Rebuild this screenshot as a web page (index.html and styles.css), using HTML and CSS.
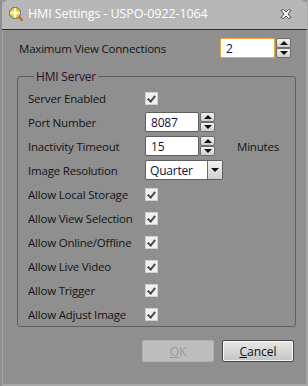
FILE: index.html
```html
<!DOCTYPE html>
<html lang="en">
<head>
    <meta charset="UTF-8">
    <title>HMI Settings</title>
    <link rel="stylesheet" href="styles.css">
</head>
<body>
    <div class="window">
        <div class="titlebar">
            <svg class="app-icon" width="16" height="16" viewBox="0 0 16 16">
                <line x1="10" y1="10" x2="14" y2="14" stroke="#c06a20" stroke-width="2.4" stroke-linecap="round"/>
                <circle cx="7" cy="7" r="5.6" fill="#f2d21c" stroke="#5a6a9a" stroke-width="1"/>
                <line x1="7" y1="1.8" x2="7" y2="12.2" stroke="#fff" stroke-width="1.2"/>
                <line x1="1.8" y1="7" x2="12.2" y2="7" stroke="#fff" stroke-width="1.2"/>
                <circle cx="7" cy="7" r="2" fill="none" stroke="#fff" stroke-width="1"/>
            </svg>
            <span class="title">HMI Settings - USPO-0922-1064</span>
            <svg class="close" width="12" height="10" viewBox="0 0 12 10">
                <path d="M1 1.5 L3.5 0.5 L6 3 L8.5 0.5 L11 1.5 L8 5 L11 8.5 L8.5 9.5 L6 7 L3.5 9.5 L1 8.5 L4 5 Z" fill="#f4f4f4" stroke="#3c3c3c" stroke-width="0.9" stroke-linejoin="round"/>
            </svg>
        </div>

        <div class="content">
            <div class="top-row">
                <label>Maximum View Connections</label>
                <div class="spinner wide">
                    <div class="textbox focused">2</div>
                    <div class="spin">
                        <span class="up"></span>
                        <span class="down"></span>
                    </div>
                </div>
            </div>

            <fieldset class="group">
                <legend>HMI Server</legend>
                <div class="grid">
                    <label>Server Enabled</label>
                    <div><span class="check"></span></div>

                    <label>Port Number</label>
                    <div class="spinner">
                        <div class="textbox">8087</div>
                        <div class="spin">
                            <span class="up"></span>
                            <span class="down"></span>
                        </div>
                    </div>

                    <label>Inactivity Timeout</label>
                    <div class="with-unit">
                        <div class="spinner">
                            <div class="textbox">15</div>
                            <div class="spin">
                                <span class="up"></span>
                                <span class="down"></span>
                            </div>
                        </div>
                        <span class="unit">Minutes</span>
                    </div>

                    <label>Image Resolution</label>
                    <div class="combo">
                        <div class="combo-text">Quarter</div>
                        <div class="combo-btn"><span class="down"></span></div>
                    </div>

                    <label>Allow Local Storage</label>
                    <div><span class="check"></span></div>

                    <label>Allow View Selection</label>
                    <div><span class="check"></span></div>

                    <label>Allow Online/Offline</label>
                    <div><span class="check"></span></div>

                    <label>Allow Live Video</label>
                    <div><span class="check"></span></div>

                    <label>Allow Trigger</label>
                    <div><span class="check"></span></div>

                    <label>Allow Adjust Image</label>
                    <div><span class="check"></span></div>
                </div>
            </fieldset>

            <div class="buttons">
                <button class="btn disabled" disabled><u>O</u>K</button>
                <button class="btn"><u>C</u>ancel</button>
            </div>
        </div>
    </div>
</body>
</html>
```

FILE: styles.css
```css
* {
    margin: 0;
    padding: 0;
    box-sizing: border-box;
}
body {
    font-family: 'Segoe UI', 'Open Sans', sans-serif;
    font-size: 11.5px;
    letter-spacing: -0.2px;
    background-color: #8f8f8f;
    color: #141414;
}
.window {
    width: 308px;
    height: 386px;
    background-color: #8f8f8f;
    border-left: 2px solid #8f8f8f;
    box-shadow: inset 1px 0 0 #a6a6a6, inset -2px 0 0 #a6a6a6, inset 0 -2px 0 #a6a6a6;
}
.titlebar {
    height: 30px;
    margin-right: 1px;
    background-color: #b7b7b7;
    border-radius: 6px 6px 0 0;
    border-bottom: 1px solid #2e2e2e;
    display: flex;
    align-items: center;
    padding: 0 0 2px 6px;
}
.app-icon {
    margin-right: 4px;
}
.title {
    color: #fff;
    font-size: 12.5px;
    letter-spacing: -0.1px;
    flex: 1;
}
.close {
    margin-right: 15px;
}
.content {
    padding: 8px 14px 0 17px;
}
.top-row {
    display: flex;
    align-items: center;
    height: 20px;
}
.top-row label {
    width: 201px;
}
.spinner {
    display: flex;
    height: 20px;
}
.textbox {
    width: 54px;
    height: 20px;
    background-color: #fff;
    border: 1px solid #5e5e5e;
    border-radius: 2px;
    padding: 1px 0 0 5px;
    font-size: 12px;
    color: #101040;
}
.spinner.wide .textbox {
    width: 55px;
}
.textbox.focused {
    border-color: #f0a640;
}
.spin {
    display: flex;
    flex-direction: column;
    width: 15px;
    margin-left: 1px;
}
.spin span,
.combo-btn {
    flex: 1;
    background: linear-gradient(#f2f2f2, #cfcfcf);
    border: 1px solid #6e6e6e;
    border-radius: 2px;
    display: flex;
    align-items: center;
    justify-content: center;
}
.spin .up::after {
    content: "";
    border-left: 4px solid transparent;
    border-right: 4px solid transparent;
    border-bottom: 4px solid #111;
}
.spin .down::after,
.combo-btn .down::after {
    content: "";
    display: block;
    border-left: 4px solid transparent;
    border-right: 4px solid transparent;
    border-top: 4px solid #111;
}
.group {
    margin: 10px 0 0 -2px;
    width: 279px;
    height: 259px;
    border: 1px solid #606060;
    border-radius: 3px;
    padding: 1px 0 0 10px;
}
.group legend {
    margin-left: 6px;
    padding: 0 2px;
    color: #2e0c2c;
    font-size: 12px;
}
.grid {
    display: grid;
    grid-template-columns: 117px 1fr;
    grid-auto-rows: 24px;
    align-items: center;
}
.check {
    display: block;
    width: 13px;
    height: 13px;
    background-color: #f0f0f0;
    border: 1px solid #cfcfcf;
    position: relative;
}
.check::after {
    content: "";
    position: absolute;
    left: 3px;
    top: 1px;
    width: 3px;
    height: 6px;
    border-right: 2px solid #4a4a4a;
    border-bottom: 2px solid #4a4a4a;
    transform: rotate(40deg);
}
.with-unit {
    display: flex;
    align-items: center;
}
.unit {
    margin-left: 22px;
}
.combo {
    display: flex;
    width: 78px;
    height: 20px;
    background-color: #fff;
    border: 1px solid #5e5e5e;
    border-radius: 2px;
}
.combo-text {
    flex: 1;
    padding: 1px 0 0 4px;
    font-size: 12px;
    color: #101040;
}
.combo-btn {
    flex: 0 0 15px;
    border-width: 0 0 0 1px;
    border-radius: 0;
}
.buttons {
    display: flex;
    justify-content: flex-end;
    gap: 8px;
    margin-top: 13px;
}
.btn {
    width: 72px;
    height: 22px;
    font-family: inherit;
    font-size: 12px;
    color: #111;
    background: linear-gradient(#e8e8e8, #c4c4c4);
    border: 1px solid #4a4a4a;
    border-radius: 2px;
    box-shadow: inset 0 0 0 1px #f4f4f4;
}
.btn.disabled {
    background: #bdbdbd;
    border-color: #b2b2b2;
    color: #9a9a9a;
    box-shadow: none;
}
```
